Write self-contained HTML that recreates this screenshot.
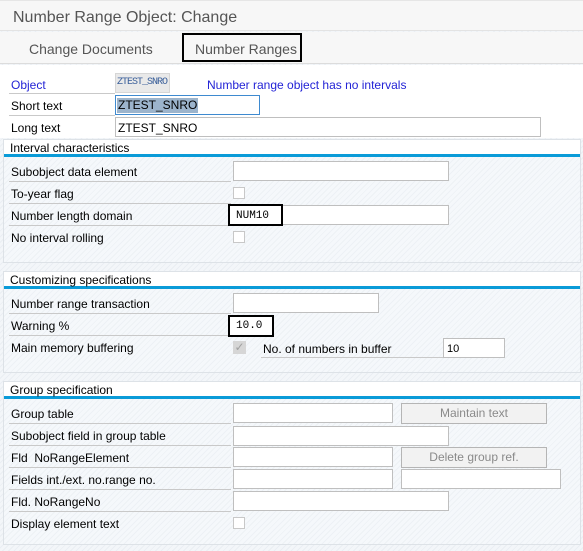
<!DOCTYPE html>
<html><head><meta charset="utf-8"><style>
*{margin:0;padding:0;box-sizing:border-box}
body{width:583px;height:551px;overflow:hidden;position:relative;font-family:"Liberation Sans","DejaVu Sans",sans-serif;font-size:12px;color:#000;
background:#f3f6f9 repeating-linear-gradient(135deg,#f3f6f9 0 3px,#eaeef3 3px 4px);}
.a{position:absolute}
.t{position:absolute;white-space:nowrap;line-height:14px;margin-top:1px}
.in{position:absolute;background:#fff;border:1px solid #bfbfbf;height:20px}
.cb{position:absolute;width:12px;height:12px;border:1px solid #c8c8c8;background:#fff}
.ul{position:absolute;height:1px;background:#c9c9c9}
.grp{position:absolute;left:3px;right:2px;border:1px solid #dde2e7;background:#f5f8fb repeating-linear-gradient(135deg,#f5f8fb 0 3px,#edf1f5 3px 4px)}
.gh{position:absolute;left:0;right:0;top:0;height:17px;background:#fff;border-bottom:3px solid #0a9bd8}
.btn{position:absolute;border:1px solid #b5b5b5;background:#f2f2f2;color:#8a8a8a;text-align:center;line-height:18px;height:21px}
.mono{font-family:"Liberation Mono",monospace;font-size:11px}
</style></head><body>
<div class="a" style="left:0;top:0;width:583px;height:31px;background:#f7f7f7;border-top:1px solid #e6e6e6;border-bottom:1px solid #e3e3e3"></div>
<div class="t" style="left:13px;top:8px;font-size:16px;line-height:18px;color:#555">Number Range Object: Change</div>
<div class="a" style="left:0;top:32px;width:583px;height:32px;background:#f7f7f7;border-bottom:1px solid #dcdcdc"></div>
<div class="t" style="left:29px;top:40px;font-size:14px;line-height:16px;color:#555">Change Documents</div>
<div class="a" style="left:182px;top:33px;width:120px;height:29px;border:2px solid #000"></div>
<div class="t" style="left:195px;top:40px;font-size:14px;line-height:16px;color:#555">Number Ranges</div>
<div class="a" style="left:0;top:65px;width:583px;height:73px;background:#fff"></div>

<div class="t" style="left:11px;top:77px;color:#2323d6">Object</div>
<div class="ul" style="left:9px;top:93px;width:106px"></div>
<div class="a mono" style="left:115px;top:73px;width:55px;height:20px;background:#e9e9e9;border:1px solid #d6d6d6;color:#3a5f9a;line-height:18px;padding-left:1px;font-size:10px;letter-spacing:-1px;overflow:hidden;white-space:nowrap">ZTEST_SNRO</div>
<div class="t" style="left:207px;top:77px;color:#2323d6">Number range object has no intervals</div>

<div class="t" style="left:11px;top:98px">Short text</div>
<div class="ul" style="left:9px;top:115px;width:106px"></div>
<div class="in" style="left:115px;top:95px;width:145px;border-color:#3e8ad0"><span style="position:absolute;left:1px;top:2px;background:#9cb4cc;line-height:15px;padding:0 1px">ZTEST_SNRO</span></div>

<div class="t" style="left:11px;top:120px">Long text</div>
<div class="in" style="left:115px;top:117px;width:426px"><span style="position:absolute;left:2px;top:3px;line-height:14px">ZTEST_SNRO</span></div>

<div class="grp" style="top:139px;height:124px"><div class="gh"></div></div>
<div class="t" style="left:10px;top:140px">Interval characteristics</div>
<div class="t" style="left:11px;top:164px">Subobject data element</div>
<div class="ul" style="left:9px;top:181px;width:222px"></div>
<div class="in" style="left:233px;top:161px;width:216px"></div>
<div class="t" style="left:11px;top:186px">To-year flag</div>
<div class="ul" style="left:9px;top:203px;width:222px"></div>
<div class="cb" style="left:233px;top:187px"></div>
<div class="t" style="left:11px;top:208px">Number length domain</div>
<div class="ul" style="left:9px;top:225px;width:222px"></div>
<div class="in" style="left:233px;top:205px;width:216px"></div>
<div class="a" style="left:228px;top:204px;width:55px;height:22px;border:2px solid #000;background:#fff"></div>
<div class="t mono" style="left:236px;top:208px">NUM10</div>
<div class="t" style="left:11px;top:230px">No interval rolling</div>
<div class="cb" style="left:233px;top:231px"></div>

<div class="grp" style="top:271px;height:102px"><div class="gh"></div></div>
<div class="t" style="left:10px;top:272px">Customizing specifications</div>
<div class="t" style="left:11px;top:296px">Number range transaction</div>
<div class="ul" style="left:9px;top:313px;width:222px"></div>
<div class="in" style="left:233px;top:293px;width:146px"></div>
<div class="t" style="left:11px;top:318px">Warning %</div>
<div class="ul" style="left:9px;top:335px;width:222px"></div>
<div class="a" style="left:228px;top:315px;width:46px;height:22px;border:2px solid #000;background:#fff"></div>
<div class="t mono" style="left:236px;top:318px">10.0</div>
<div class="t" style="left:11px;top:340px">Main memory buffering</div>
<div class="a" style="left:233px;top:341px;width:13px;height:13px;background:#d6d6d6;color:#a0a0a0;font-size:12px;line-height:13px;text-align:center">✓</div>
<div class="t" style="left:263px;top:341px">No. of numbers in buffer</div>
<div class="ul" style="left:261px;top:357px;width:182px"></div>
<div class="in" style="left:443px;top:338px;width:62px"><span style="position:absolute;left:3px;top:3px;line-height:14px;font-size:11px">10</span></div>

<div class="grp" style="top:381px;height:164px"><div class="gh"></div></div>
<div class="t" style="left:10px;top:382px">Group specification</div>
<div class="t" style="left:11px;top:406px">Group table</div>
<div class="ul" style="left:9px;top:423px;width:222px"></div>
<div class="in" style="left:233px;top:403px;width:160px"></div>
<div class="btn" style="left:401px;top:403px;width:146px">Maintain text</div>
<div class="t" style="left:11px;top:428px">Subobject field in group table</div>
<div class="ul" style="left:9px;top:445px;width:222px"></div>
<div class="in" style="left:233px;top:426px;width:216px"></div>
<div class="t" style="left:11px;top:450px">Fld&nbsp; NoRangeElement</div>
<div class="ul" style="left:9px;top:467px;width:222px"></div>
<div class="in" style="left:233px;top:447px;width:160px"></div>
<div class="btn" style="left:401px;top:447px;width:146px">Delete group ref.</div>
<div class="t" style="left:11px;top:472px">Fields int./ext. no.range no.</div>
<div class="ul" style="left:9px;top:489px;width:222px"></div>
<div class="in" style="left:233px;top:469px;width:160px"></div>
<div class="in" style="left:401px;top:469px;width:160px"></div>
<div class="t" style="left:11px;top:494px">Fld. NoRangeNo</div>
<div class="ul" style="left:9px;top:511px;width:222px"></div>
<div class="in" style="left:233px;top:491px;width:216px"></div>
<div class="t" style="left:11px;top:516px">Display element text</div>
<div class="cb" style="left:233px;top:517px"></div>
</body></html>
